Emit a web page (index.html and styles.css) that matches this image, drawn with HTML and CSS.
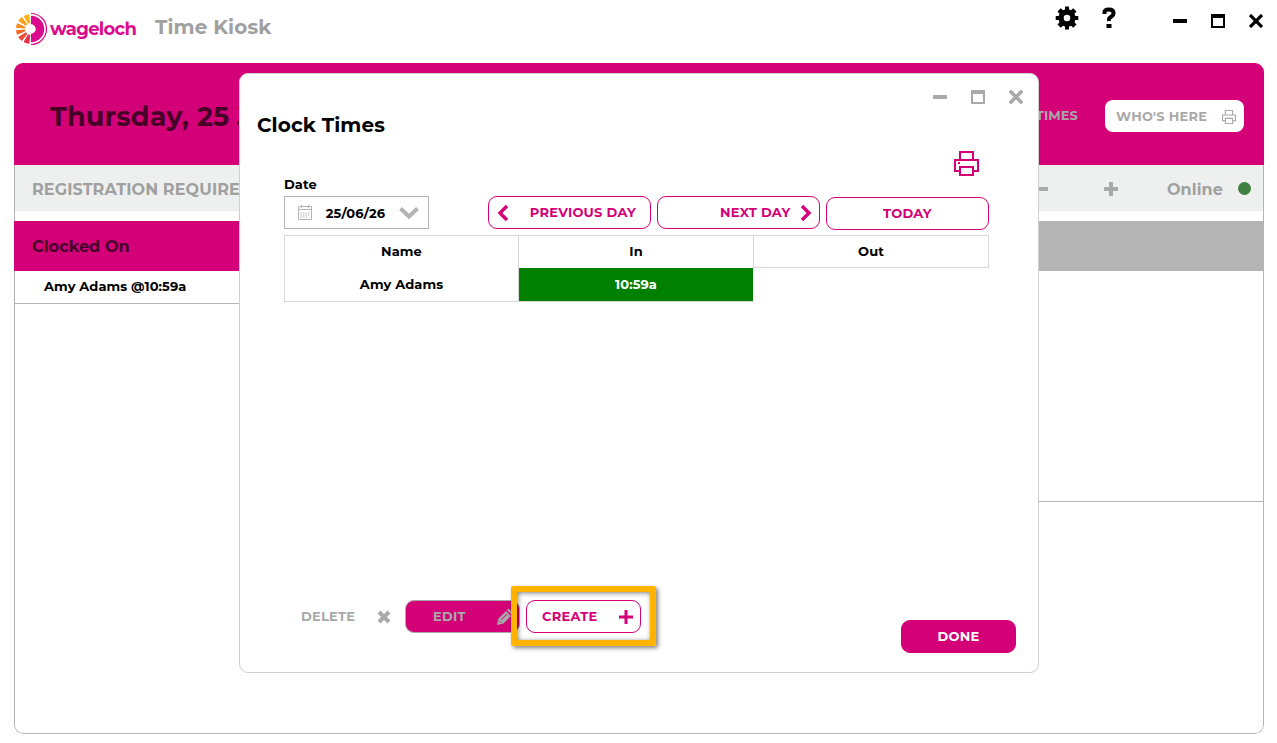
FILE: index.html
```html
<!DOCTYPE html>
<html lang="en">
<head>
    <meta charset="UTF-8">
    <meta name="viewport" content="width=device-width, initial-scale=1.0">
    <title>Wageloch Time Kiosk</title>
    <link rel="stylesheet" href="styles.css">
</head>
<body>
    <header class="topbar">
        <svg class="logo-mark" viewBox="0 0 32 34" width="32" height="34">
            <path d="M16 8A9 9 0 0 1 16 26" fill="none" stroke="#dc0a8c" stroke-width="8.500"/>
            <path d="M16 1.500A15.500 15.500 0 0 1 16 32.500" fill="none" stroke="#dc0a8c" stroke-width="1.200"/>
            <g fill="none" stroke-width="9">
                <path d="M14.800 6.600A10.500 10.500 0 0 0 10.800 7.900" stroke="#fbb01c"/>
                <path d="M9.600 8.600A10.500 10.500 0 0 0 7.100 11.400" stroke="#f9a11b"/>
                <path d="M6.300 12.900A10.500 10.500 0 0 0 5.500 16.200" stroke="#f68b1f"/>
                <path d="M5.500 17.800A10.500 10.500 0 0 0 6.300 21.100" stroke="#f26a26"/>
                <path d="M7.100 22.600A10.500 10.500 0 0 0 9.600 25.400" stroke="#ee4a36"/>
                <path d="M10.800 26.100A10.500 10.500 0 0 0 14.800 27.400" stroke="#e5304f"/>
            </g>
        </svg>
        <span class="brand">wageloch</span>
        <h1>Time Kiosk</h1>
        <div class="top-icons">
            <svg class="gear" viewBox="0 0 24 24" width="24" height="24">
                <path fill="#000" fill-rule="evenodd" d="M10 .5h4v3l2 .8 2.200-2 3.300 3.300-2 2.200.8 2.200h3v4h-3l-.8 2.200 2 2.200-3.300 3.300-2.200-2-2 .8v3h-4v-3l-2-.8-2.200 2-3.300-3.300 2-2.200-.8-2.200H.7v-4h3l.8-2.200-2-2.200 3.300-3.300 2.200 2 2-.8zM12 8.700a3.300 3.300 0 1 0 0 6.600 3.300 3.300 0 0 0 0-6.600z"/>
            </svg>
            <svg class="help" viewBox="0 0 14 22" width="14" height="22">
                <path d="M2.500 7V5.500Q2.500 2.500 7 2.500T11.500 6Q11.500 8.500 9 9.800T7 14" fill="none" stroke="#000" stroke-width="4"/>
                <path d="M4.500 17h5v4h-5z"/>
            </svg>
            <svg class="win" viewBox="0 0 14 14" width="14" height="14"><path d="M0 5h14v4H0z"/></svg>
            <svg class="win" viewBox="0 0 14 14" width="14" height="14"><path fill-rule="evenodd" d="M0 0h14v14H0zM2 4v8h10V4z"/></svg>
            <svg class="win" viewBox="0 0 14 14" width="14" height="14"><path d="M1 1l12 12M13 1L1 13" stroke="#000" stroke-width="3.200"/></svg>
        </div>
    </header>

    <main class="kiosk">
        <div class="banner">
            <span class="today-date">Thursday, 25 June</span>
            <span class="times-link">CLOCK TIMES</span>
            <button class="whos-here">
                <span>WHO'S HERE</span>
                <svg viewBox="0 0 25 25" width="14" height="14" fill="none" stroke="#a9a9a9" stroke-width="2">
                    <path d="M6 8V1h13v7M6 19H1V9h23v10h-5M6 15h13v9H6z"/>
                </svg>
            </button>
        </div>
        <div class="status">
            <span class="registration">REGISTRATION REQUIRED</span>
            <svg class="minus" viewBox="0 0 14 14" width="14" height="14"><path d="M0 5h14v4H0z" fill="#a9a9a9"/></svg>
            <svg class="plus" viewBox="0 0 14 14" width="14" height="14"><path d="M5 0h4v5h5v4H9v5H5V9H0V5h5z" fill="#a9a9a9"/></svg>
            <span class="online">Online</span>
            <span class="dot"></span>
        </div>
        <div class="panels">
            <section class="panel on">
                <h2>Clocked On</h2>
                <div class="employee">Amy Adams @10:59a</div>
            </section>
            <section class="panel off">
                <h2></h2>
                <div class="list"></div>
            </section>
        </div>
    </main>

    <div class="dialog">
        <div class="dialog-controls">
            <svg viewBox="0 0 14 14" width="14" height="14"><path d="M0 5h14v4H0z"/></svg>
            <svg viewBox="0 0 14 14" width="14" height="14"><path fill-rule="evenodd" d="M0 0h14v14H0zM2 4v8h10V4z"/></svg>
            <svg viewBox="0 0 14 14" width="14" height="14"><path d="M2 2l10 10M12 2L2 12" stroke="#a9a9a9" stroke-width="3.600" stroke-linecap="square"/></svg>
        </div>
        <h2 class="dialog-title">Clock Times</h2>
        <div class="print-row">
            <svg viewBox="0 0 25 25" width="25" height="25" fill="none" stroke="#d40078" stroke-width="2">
                <path d="M6 8V1h13v7M6 20H1V9h23v11h-5M6 16h13v8H6z"/>
                <path d="M4 12h2"/>
            </svg>
        </div>
        <div class="filters">
            <div class="date-field">
                <label>Date</label>
                <div class="date-box">
                    <svg viewBox="0 0 14 15" width="14" height="15">
                        <path d="M.5 1.500h13v13H.5zM.5 4.500h13M3.500 0v3M10.500 0v3" fill="none" stroke="#b4b4b4"/>
                        <path d="M2.500 8h9M2.500 10h9M2.500 12h7" fill="none" stroke="#b4b4b4" stroke-dasharray="1.500 1"/>
                    </svg>
                    <span>25/06/26</span>
                    <svg viewBox="0 0 20 12" width="20" height="12"><path d="M1.500 1.500L10 9.500l8.500-8" fill="none" stroke="#b4b4b4" stroke-width="4"/></svg>
                </div>
            </div>
            <div class="day-buttons">
                <button class="btn prev">
                    <svg viewBox="0 0 12 18" width="12" height="18"><path d="M10 2L3 9l7 7" fill="none" stroke="#d40078" stroke-width="3.400"/></svg>
                    <span>PREVIOUS DAY</span>
                </button>
                <button class="btn next">
                    <span>NEXT DAY</span>
                    <svg viewBox="0 0 12 18" width="12" height="18"><path d="M2 2l7 7-7 7" fill="none" stroke="#d40078" stroke-width="3.400"/></svg>
                </button>
                <button class="btn today"><span>TODAY</span></button>
            </div>
        </div>
        <div class="times">
            <div class="cell name">Name</div>
            <div class="cell in">In</div>
            <div class="cell out">Out</div>
            <div class="cell name-value">Amy Adams</div>
            <div class="cell in-value">10:59a</div>
        </div>
        <div class="actions">
            <button class="delete">
                <span>DELETE</span>
                <svg viewBox="0 0 14 14" width="14" height="14"><path d="M2 2l10 10M12 2L2 12" stroke="#a9a9a9" stroke-width="4"/></svg>
            </button>
            <button class="btn edit">
                <span>EDIT</span>
                <svg viewBox="0 0 18 18" width="18" height="18">
                    <path d="M1 17l1.500-6.500L10 3l5 5-7.500 7.500zM11 2l1.500-1.500 5 5L16 7z" fill="#a9a9a9"/>
                    <path d="M3.500 13l1.500 1.500M5 12l6-6" stroke="#d40078" stroke-width="1"/>
                </svg>
            </button>
            <button class="btn create">
                <span>CREATE</span>
                <svg viewBox="0 0 14 14" width="14" height="14"><path d="M5.500 0h3v5.500H14v3H8.500V14h-3V8.500H0v-3h5.500z" fill="#d40078"/></svg>
            </button>
            <button class="btn done"><span>DONE</span></button>
        </div>
        <div class="highlight"></div>
    </div>
</body>
</html>
```
FILE: styles.css
```css
* {
    box-sizing: border-box;
}

body {
    font-family: 'Montserrat', Inter, sans-serif;
    font-weight: 700;
    font-size: 13px;
    letter-spacing: 0.1px;
    color: #000;
    background-color: #fff;
    margin: 0;
    height: 743px;
    overflow: hidden;
    position: relative;
}

h1, h2 {
    margin: 0;
}

svg {
    display: block;
    flex-shrink: 0;
}

button {
    font: inherit;
    letter-spacing: 0.25px;
    padding: 0;
    border: none;
    background: none;
    cursor: pointer;
    display: flex;
    align-items: center;
}

.topbar {
    height: 63px;
    padding: 12px 14px 0 15px;
    display: flex;
    align-items: flex-start;
}

.brand {
    margin: 4px 0 0 3px;
    width: 105px;
    font-size: 18px;
    line-height: 26px;
    letter-spacing: -0.7px;
    color: #dc0a8c;
}

.topbar h1 {
    font-size: 20px;
    line-height: 26px;
    margin-top: 2px;
    color: #a0a0a0;
}

.top-icons {
    margin: -6px 0 0 auto;
    display: flex;
    align-items: flex-start;
}

.help {
    margin: 1px 57px 0 23px;
}

.win {
    margin-top: 8px;
}

.win + .win {
    margin-left: 24px;
}

.kiosk {
    margin: 0 13px 0 14px;
    height: 671px;
    border-radius: 9px;
    overflow: hidden;
    display: flex;
    flex-direction: column;
}

.banner {
    height: 102px;
    padding: 4px 20px 0 36px;
    background-color: #d40078;
    display: flex;
    align-items: center;
}

.today-date {
    font-size: 27px;
    letter-spacing: 0.2px;
    color: #460028;
}

.times-link {
    margin-left: auto;
    color: #a9a9a9;
    padding-bottom: 2px;
}

.whos-here {
    width: 139px;
    height: 32px;
    margin-left: 27px;
    padding: 0 8px 0 11px;
    justify-content: space-between;
    background-color: #fff;
    border-radius: 8px;
    color: #a9a9a9;
}

.whos-here span {
    padding-bottom: 1px;
}

.whos-here svg {
    margin-top: 2px;
}

.status {
    height: 46px;
    padding: 3px 12px 0 17px;
    border: 0 solid #b4b4b4;
    border-width: 0 1px;
    background-color: #eef0ef;
    color: #a0a0a0;
    font-size: 16px;
    display: flex;
    align-items: center;
}

.status svg, .dot {
    position: relative;
    top: -1px;
}

.minus {
    margin-left: auto;
}

.plus {
    margin: 0 49px 0 56px;
}

.dot {
    width: 13px;
    height: 13px;
    margin-left: 15px;
    border-radius: 50%;
    background-color: #408040;
}

.panels {
    flex: 1;
    padding-top: 10px;
    display: flex;
    border: 1px solid #b4b4b4;
    border-top: none;
    border-radius: 0 0 9px 9px;
}

.panel {
    flex: 1;
}

.panel h2 {
    height: 50px;
    margin-left: -1px;
    padding-left: 18px;
    line-height: 51px;
    font-size: 16px;
    color: #460028;
    background-color: #d40078;
}

.panel.off h2 {
    background-color: #b4b4b4;
}

.employee {
    height: 33px;
    padding-left: 29px;
    line-height: 31px;
    border-bottom: 1px solid #b4b4b4;
}

.list {
    height: 231px;
    border-bottom: 1px solid #b4b4b4;
}

/* dialog over the kiosk */
.dialog {
    position: absolute;
    left: 239px;
    top: 73px;
    width: 800px;
    height: 600px;
    border: 1px solid #d0d0d0;
    border-radius: 9px;
    background-color: #fff;
    padding: 16px 22px 0 17px;
}

.dialog-controls {
    display: flex;
    justify-content: flex-end;
    gap: 24px;
    margin-right: -7px;
    fill: #a9a9a9;
}

.dialog-title {
    font-size: 20px;
    line-height: 26px;
    margin-top: 8px;
}

.print-row {
    display: flex;
    justify-content: flex-end;
    margin: 13px 37px 0 0;
}

.filters {
    display: flex;
    justify-content: space-between;
    align-items: flex-end;
    margin: 0 27px 0 27px;
}

.date-field label {
    display: block;
    line-height: 16px;
    margin-bottom: 4px;
}

.date-box {
    width: 145px;
    height: 33px;
    border: 1px solid #b4b4b4;
    padding: 0 9px 0 13px;
    display: flex;
    align-items: center;
    justify-content: space-between;
}

.day-buttons {
    display: flex;
    gap: 6px;
}

.btn {
    height: 33px;
    border: 1px solid #d40078;
    border-radius: 9px;
    color: #d40078;
    background-color: #fff;
}

.btn span, .delete span {
    padding-bottom: 2px;
}

.day-buttons .btn {
    width: 163px;
    justify-content: space-between;
}

.btn.prev {
    padding: 0 14px 0 8px;
}

.btn.next {
    padding: 0 7px 0 62px;
}

.day-buttons .today {
    justify-content: center;
    margin: 1px 0 -1px;
}

.times {
    display: grid;
    grid-template-columns: 235px 235px 235px;
    grid-template-rows: 33px 34px;
    margin: 6px 0 0 27px;
    width: 705px;
}

.cell {
    display: flex;
    align-items: center;
    justify-content: center;
    padding-bottom: 2px;
    border: 0 solid #d8d8d8;
}

.name {
    border-width: 1px 1px 0 1px;
}

.in {
    border-width: 1px 1px 0 0;
}

.out {
    border-width: 1px 1px 1px 0;
    padding-bottom: 1px;
}

.name-value {
    border-width: 0 1px 1px 1px;
}

.in-value {
    border-width: 0 0 1px 0;
    margin-right: 1px;
    color: #fff;
    background-color: #008000;
}

.actions {
    display: flex;
    align-items: flex-start;
    margin-top: 298px;
}

.delete {
    height: 33px;
    margin-left: 44px;
    width: 90px;
    justify-content: space-between;
    color: #a9a9a9;
}

.edit {
    width: 115px;
    margin-left: 14px;
    padding: 0 5px 0 27px;
    justify-content: space-between;
    color: #a9a9a9;
    border-color: #a9a9a9;
    background-color: #d40078;
}

.create {
    width: 115px;
    margin-left: 6px;
    padding: 0 7px 0 15px;
    justify-content: space-between;
}

.done {
    width: 115px;
    margin: 20px 0 0 auto;
    justify-content: center;
    color: #fff;
    background-color: #d40078;
}

/* marks the create button */
.highlight {
    position: absolute;
    left: 271px;
    top: 512px;
    width: 145px;
    height: 60px;
    border: 6px solid #ffb400;
    border-radius: 2px;
    box-shadow: 2px 2px 4px rgba(0, 0, 0, 0.5), inset 1px 1px 5px rgba(0, 0, 0, 0.5);
}
```
